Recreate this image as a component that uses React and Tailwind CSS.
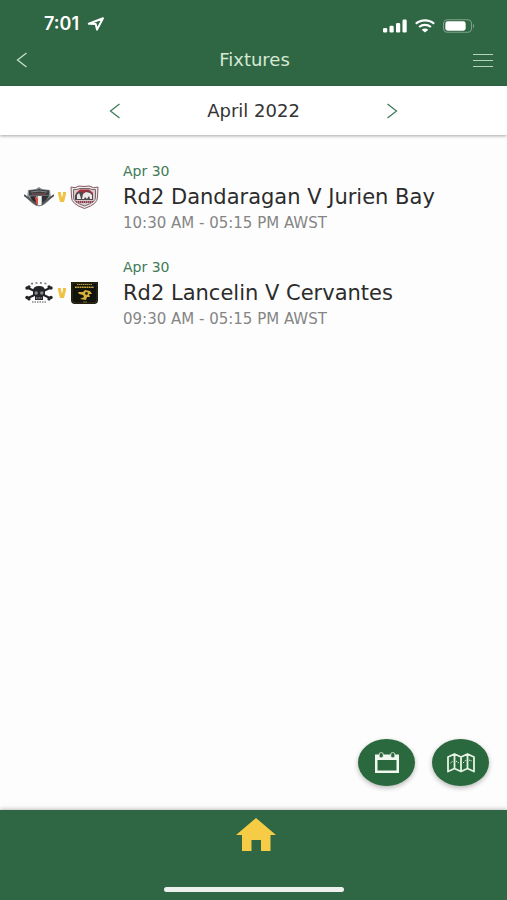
function Chevron({ flip, className }) {
  return (
    <svg viewBox="0 0 12 16" className={`h-4 w-3 ${flip ? "rotate-180" : ""} ${className}`} fill="none" stroke="currentColor" strokeWidth="1.3" aria-hidden="true">
      <path d="M10.5 1 L1.5 8 L10.5 15" />
    </svg>
  );
}

function StatusBar() {
  return (
    <div className="flex h-12 items-center justify-between pl-11 pr-8 text-white">
      <div className="flex items-center gap-1">
        <span className="font-['Inter','DejaVu_Sans',sans-serif] text-lg font-semibold">7:01</span>
        <svg viewBox="0 0 18 14" className="ml-1 h-3.5 w-4.5" fill="none" stroke="currentColor" strokeWidth="2" strokeLinejoin="round" aria-hidden="true">
          <path d="M1.8 6.7 L16 1.3 L10 12.6 L8.7 7 Z" />
        </svg>
      </div>
      <div className="flex items-center gap-2 pt-1">
        <svg viewBox="0 0 24 13" className="h-3.5 w-6" fill="currentColor" aria-hidden="true">
          <rect x="0" y="8.5" width="4.2" height="4.5" rx="1.2" />
          <rect x="6.5" y="6.3" width="4.2" height="6.7" rx="1.2" />
          <rect x="13" y="3.4" width="4.2" height="9.6" rx="1.2" />
          <rect x="19.5" y="0" width="4.2" height="13" rx="1.2" />
        </svg>
        <svg viewBox="0 0 20 13" className="h-3.5 w-5" fill="none" stroke="currentColor" strokeWidth="2.1" aria-hidden="true">
          <path d="M.8 4.3 C6-.3 14-.3 19.2 4.3" />
          <path d="M4.1 7.5 C7.5 4.6 12.5 4.6 15.9 7.5" />
          <path d="M10 13 L6.7 10.2 C8.5 8.6 11.5 8.6 13.3 10.2 Z" fill="currentColor" stroke="none" />
        </svg>
        <svg viewBox="0 0 33 14" className="h-3.5 w-8" aria-hidden="true">
          <rect x=".6" y=".6" width="28.8" height="12.8" rx="4" fill="none" stroke="#7fa28b" strokeWidth="1.1" />
          <rect x="2.4" y="2.2" width="21" height="9.6" rx="2.5" fill="#fff" />
          <path d="M31 4.5 Q33.4 7 31 9.5 Z" fill="#7fa28b" />
        </svg>
      </div>
    </div>
  );
}

function YellowV() {
  return (
    <svg viewBox="0 0 8 10" className="h-2.5 w-2" aria-hidden="true">
      <path d="M0 0 H3 V1.5 L4 6 L5 1.5 V0 H8 V2 L6 10 H2 L0 2 Z" fill="#efc341" />
    </svg>
  );
}

function DandaraganLogo() {
  return (
    <svg viewBox="0 0 30 20" className="h-5 w-[30px]" aria-label="Dandaragan" role="img">
      <path d="M4 3 L12 2 L15 0 L18 2 L26 3 L27 11 Q22 18 15 19.5 Q8 18 3 11 Z" fill="#8d9092" />
      <path d="M5 3.5 L14 2.5 L15 1.5 L16 2.5 L25 3.5 V8.5 H5 Z" fill="#3b3d40" />
      <path d="M7 5 Q15 3 23 5" stroke="#999" strokeWidth=".8" fill="none" />
      <path d="M8 7 H22" stroke="#8d4e52" strokeWidth="1" />
      <path d="M0 8 L8 14 L13 18 M30 8 L22 14 L17 18" stroke="#525558" strokeWidth="1.8" fill="none" />
      <path d="M6 9.5 L12 9 V16 L8 13 Z" fill="#292b2e" />
      <path d="M10.5 9 L14 12 V18 L12.5 17 Z" fill="#e34c3d" />
      <path d="M14 9 H17.5 V18 H14 Z" fill="#f4f1f1" />
      <path d="M18 9 L25 9 L22 13 L18 16 Z" fill="#303236" />
    </svg>
  );
}

function JurienLogo() {
  return (
    <svg viewBox="0 0 29 24" className="h-6 w-[29px]" aria-label="Jurien Bay" role="img">
      <path d="M1 2 Q5 4 9 1 Q14 2 19 1 Q24 4 28 2 L27.5 12 Q28 19 14.5 23.5 Q1 19 1.5 12 Z" fill="#eee9e9" stroke="#855960" strokeWidth="1" />
      <path d="M3.5 4.5 Q7 5 10 3.5 H19 Q22 5 25.5 4.5 V12 Q26 17 14.5 21 Q3 17 3.5 12 Z" fill="#d6c9cb" stroke="#6d5a60" strokeWidth=".9" />
      <path d="M6 8 L10 4.5 H19 L23 8 V10 H6 Z" fill="#a52f3d" />
      <path d="M5 10 L8 7 H12 L14 9 L16 6 L20 7 L23 10 V15 H5 Z" fill="#4e494c" />
      <path d="M7 14 V10 L9 8 L10 10 L11 14 Z M12 14 L13 9 L16 7 L20 8 L22 10 L22 14 H20 L19 11 L17 14 L15 12 L14 14 Z" fill="#ece8e8" />
      <path d="M5 16 H24 L22 18 H7 Z" fill="#8e3c49" />
      <path d="M7 17 H22" stroke="#e4d7d8" strokeWidth=".9" strokeDasharray="1 1" />
    </svg>
  );
}

function LancelinLogo() {
  return (
    <svg viewBox="0 0 28 22" className="h-[22px] w-7" aria-label="Lancelin" role="img">
      <path d="M6 1.8 Q14 0 22 1.8" stroke="#777" strokeWidth="1.6" strokeDasharray="2 2.5" fill="none" />
      <path d="M3 6 L25 16 M25 6 L3 16" stroke="#222427" strokeWidth="2.1" />
      <g fill="#222427">
        <circle cx="2" cy="6" r="1.7" /><circle cx="4" cy="4.8" r="1.6" />
        <circle cx="26" cy="6" r="1.7" /><circle cx="24" cy="4.8" r="1.6" />
        <circle cx="2" cy="15.5" r="1.7" /><circle cx="4" cy="17" r="1.6" />
        <circle cx="26" cy="15.5" r="1.7" /><circle cx="24" cy="17" r="1.6" />
        <path d="M8 9 Q8 4 14 4 Q20 4 20 9 V13 L18 14 V18 H10 V14 L8 13 Z" />
      </g>
      <circle cx="11.2" cy="11" r="1.7" fill="#8a8a8a" /><circle cx="16.8" cy="11" r="1.7" fill="#8a8a8a" />
      <path d="M11 16 H17" stroke="#ccc" strokeWidth="1" strokeDasharray="1 .6" />
      <path d="M7 20 H21" stroke="#888" strokeWidth="1.4" strokeDasharray="1.5 1" />
    </svg>
  );
}

function CervantesLogo() {
  return (
    <svg viewBox="0 0 27 23" className="h-[23px] w-[27px]" aria-label="Cervantes" role="img">
      <path d="M0 0 H27 V18 Q27 22 23 22 H4 Q0 22 0 18 Z" fill="#11130c" />
      <path d="M1 1 H26 V18 Q26 21 22 21 H5 Q1 21 1 18 Z" fill="none" stroke="#5e5220" strokeWidth=".5" />
      <path d="M6 2.5 H21" stroke="#b99a38" strokeWidth="1.2" strokeDasharray="1.5 .5" />
      <path d="M4 5.2 H23" stroke="#c8a73c" strokeWidth="1.4" strokeDasharray="1.8 .5" />
      <path d="M7 10 L12 10 L14 8 L19 9 L21 12 L18 12 L19 15 L16 15 L15 18 L9 17 L13 15 L12 13 L8 12 Z" fill="#d6af3c" />
      <circle cx="15.5" cy="11.5" r="1.4" fill="#272616" />
      <path d="M12 20 H16" stroke="#8f792c" strokeWidth=".9" />
    </svg>
  );
}

const fixtures = [
  { date: "Apr 30", title: "Rd2 Dandaragan V Jurien Bay", time: "10:30 AM - 05:15 PM AWST", Home: DandaraganLogo, Away: JurienLogo },
  { date: "Apr 30", title: "Rd2 Lancelin V Cervantes", time: "09:30 AM - 05:15 PM AWST", Home: LancelinLogo, Away: CervantesLogo },
];

export default function App() {
  return (
    <div className="flex min-h-screen flex-col bg-[#fdfdfd] font-['DejaVu_Sans',sans-serif] text-[#333]">
      <header className="bg-[#2f6643]">
        <StatusBar />
        <div className="flex h-[38px] items-start justify-between pl-4 pr-3.5 text-[#d5e9d5]">
          <button type="button" aria-label="Back" className="flex h-6 w-5 items-center">
            <Chevron className="text-[#c4dfc5]" />
          </button>
          <h1 className="text-lg leading-6">Fixtures</h1>
          <button type="button" aria-label="Menu" className="flex h-6 w-5 items-center">
            <svg viewBox="0 0 20 14" className="h-3.5 w-5" stroke="#b5d5b6" strokeWidth="1.1" aria-hidden="true">
              <path d="M0 1.5 H20 M0 7.5 H20 M0 13.5 H20" />
            </svg>
          </button>
        </div>
      </header>

      <div className="flex h-[49px] items-center justify-center bg-white shadow-[0_1px_3px_rgba(0,0,0,0.35)]">
        <div className="flex w-[290px] items-center justify-between">
          <button type="button" aria-label="Previous month"><Chevron className="text-[#3f7d5c]" /></button>
          <h2 className="text-lg leading-6">April 2022</h2>
          <button type="button" aria-label="Next month"><Chevron flip className="text-[#3f7d5c]" /></button>
        </div>
      </div>

      <main className="flex flex-1 flex-col pt-6">
        <ul className="flex flex-col gap-5">
          {fixtures.map(({ date, title, time, Home, Away }) => (
            <li key={title} className="flex h-[76px] items-center pl-6">
              <div className="flex w-[99px] shrink-0 items-center">
                <div className="flex w-[30px] justify-center"><Home /></div>
                <div className="flex w-4 justify-center"><YellowV /></div>
                <div className="flex w-[29px] justify-center"><Away /></div>
              </div>
              <div>
                <p className="text-sm leading-6 text-[#3d7a55]">{date}</p>
                <h3 className="whitespace-nowrap text-[21px] leading-7 text-[#2c2c2c]">{title}</h3>
                <p className="whitespace-nowrap text-[15px] leading-6 text-[#858585]">{time}</p>
              </div>
            </li>
          ))}
        </ul>
        <div className="mt-auto flex justify-end gap-[17px] pb-6 pr-[18px]">
          <button type="button" aria-label="Calendar" className="flex h-[47px] w-[57px] items-center justify-center rounded-[50%] bg-[#2a693e] shadow-[0_2px_5px_rgba(0,0,0,0.28)]">
            <svg viewBox="0 0 26 22" className="h-[22px] w-[26px]" fill="none" aria-hidden="true">
              <path d="M1 2.5 H25 V21 H1 Z M3.5 8 V18.5 H22.5 V8 Z" fill="#f2f7ef" fillRule="evenodd" />
              <rect x="5.2" y=".7" width="4" height="5" rx="1.4" fill="#2a693e" stroke="#f2f7ef" strokeWidth=".8" />
              <rect x="16.8" y=".7" width="4" height="5" rx="1.4" fill="#2a693e" stroke="#f2f7ef" strokeWidth=".8" />
            </svg>
          </button>
          <button type="button" aria-label="Map" className="flex h-[47px] w-[57px] items-center justify-center rounded-[50%] bg-[#2a693e] shadow-[0_2px_5px_rgba(0,0,0,0.28)]">
            <svg viewBox="0 0 28 20" className="h-5 w-7" fill="none" stroke="#e5f2e3" strokeWidth="1.8" strokeLinejoin="round" aria-hidden="true">
              <path d="M1 4 L7.5 1 L14 4 L20.5 1 L27 4 V18.5 L20.5 15.5 L14 18.5 L7.5 15.5 L1 18.5 Z M7.5 1 V15.5 M14 4 V18.5 M20.5 1 V15.5" />
              <path d="M3.5 10 L6 8 M9 8 L12 10 M16 10 L19 7 M22 7 L25 8" strokeWidth="1" strokeDasharray="1.5 1" />
            </svg>
          </button>
        </div>
      </main>

      <footer className="flex h-[90px] flex-col items-center justify-between bg-[#2f6643] pb-2 pt-2 shadow-[0_-1px_4px_rgba(0,0,0,0.25)]">
        <a href="#home" aria-label="Home" className="ml-1">
          <svg viewBox="0 0 40 33" className="h-[33px] w-10" fill="#f6cb45" aria-hidden="true">
            <path d="M20 0 L40 17 H34.5 V33 H25 V22 H15.5 V33 H6 V17 H0 Z" />
          </svg>
        </a>
        <div className="h-[5px] w-[180px] rounded-full bg-[#edf1ed]" />
      </footer>
    </div>
  );
}
